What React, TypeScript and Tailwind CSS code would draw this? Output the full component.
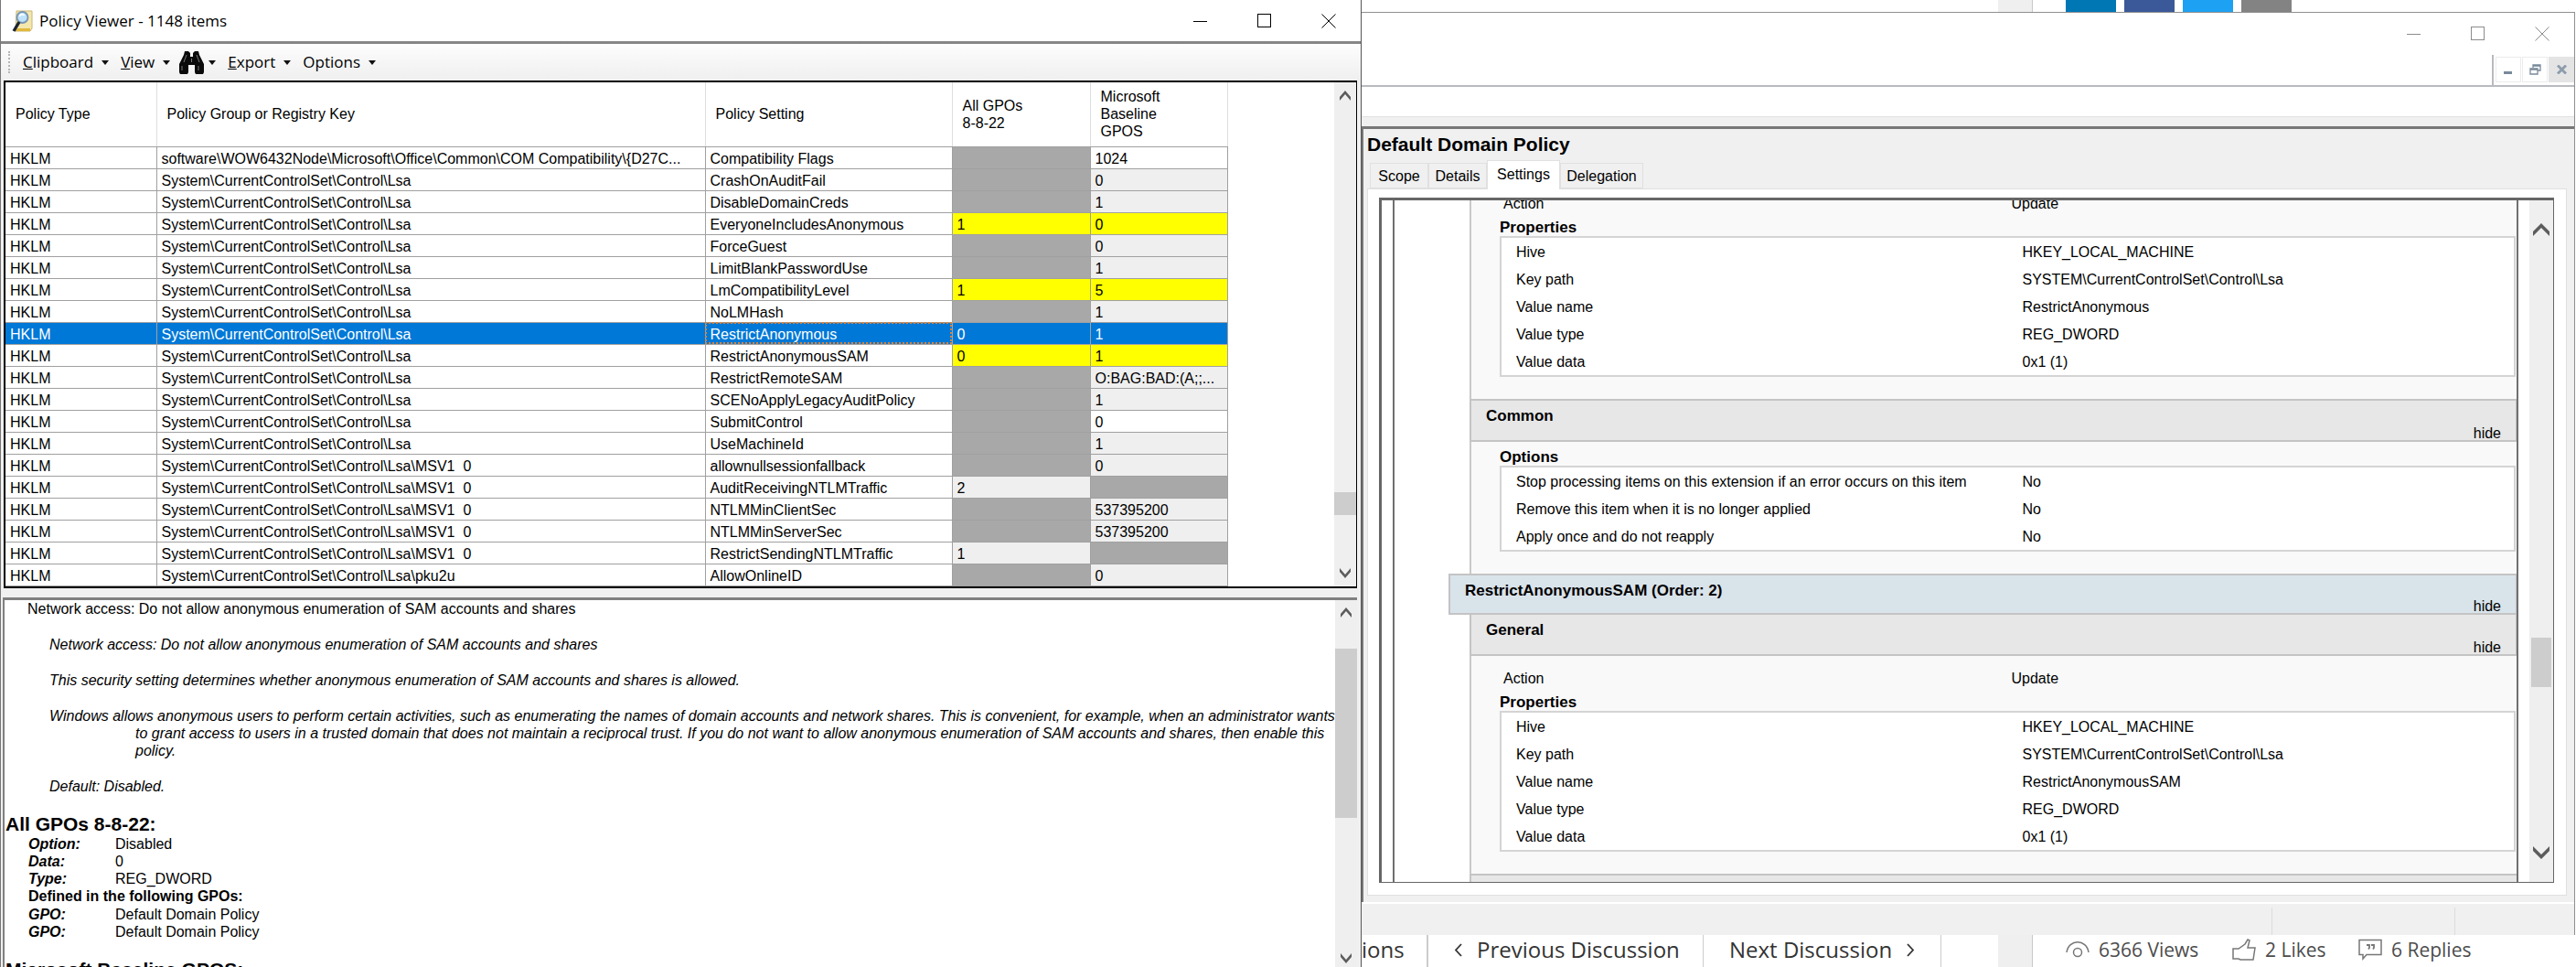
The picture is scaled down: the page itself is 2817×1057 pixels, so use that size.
import React, { useState } from 'react';

type CellTone = 'plain' | 'shade' | 'empty' | 'diff';

interface PolicyRow {
  path: string;
  setting: string;
  all: string;
  allTone: CellTone;
  base: string;
  baseTone: CellTone;
}

const LSA = 'System\\CurrentControlSet\\Control\\Lsa';
const MSV = 'System\\CurrentControlSet\\Control\\Lsa\\MSV1  0';

const row = (
  path: string,
  setting: string,
  all: string,
  allTone: CellTone,
  base: string,
  baseTone: CellTone
): PolicyRow => ({ path, setting, all, allTone, base, baseTone });

const rows: PolicyRow[] = [
  row('software\\WOW6432Node\\Microsoft\\Office\\Common\\COM Compatibility\\{D27C...', 'Compatibility Flags', '', 'empty', '1024', 'plain'),
  row(LSA, 'CrashOnAuditFail', '', 'empty', '0', 'shade'),
  row(LSA, 'DisableDomainCreds', '', 'empty', '1', 'shade'),
  row(LSA, 'EveryoneIncludesAnonymous', '1', 'diff', '0', 'diff'),
  row(LSA, 'ForceGuest', '', 'empty', '0', 'shade'),
  row(LSA, 'LimitBlankPasswordUse', '', 'empty', '1', 'shade'),
  row(LSA, 'LmCompatibilityLevel', '1', 'diff', '5', 'diff'),
  row(LSA, 'NoLMHash', '', 'empty', '1', 'shade'),
  row(LSA, 'RestrictAnonymous', '0', 'diff', '1', 'diff'),
  row(LSA, 'RestrictAnonymousSAM', '0', 'diff', '1', 'diff'),
  row(LSA, 'RestrictRemoteSAM', '', 'empty', 'O:BAG:BAD:(A;;...', 'shade'),
  row(LSA, 'SCENoApplyLegacyAuditPolicy', '', 'empty', '1', 'shade'),
  row(LSA, 'SubmitControl', '', 'empty', '0', 'plain'),
  row(LSA, 'UseMachineId', '', 'empty', '1', 'shade'),
  row(MSV, 'allownullsessionfallback', '', 'empty', '0', 'shade'),
  row(MSV, 'AuditReceivingNTLMTraffic', '2', 'shade', '', 'empty'),
  row(MSV, 'NTLMMinClientSec', '', 'empty', '537395200', 'shade'),
  row(MSV, 'NTLMMinServerSec', '', 'empty', '537395200', 'shade'),
  row(MSV, 'RestrictSendingNTLMTraffic', '1', 'shade', '', 'empty'),
  row(LSA + '\\pku2u', 'AllowOnlineID', '', 'empty', '0', 'shade'),
];

const toneClass: Record<CellTone, string> = {
  plain: 'bg-white',
  shade: 'bg-[#efefef]',
  empty: 'bg-[#a8a8a8]',
  diff: 'bg-[#ffff00]',
};

const registryValues = (name: string) => [
  ['Hive', 'HKEY_LOCAL_MACHINE'],
  ['Key path', 'SYSTEM\\CurrentControlSet\\Control\\Lsa'],
  ['Value name', name],
  ['Value type', 'REG_DWORD'],
  ['Value data', '0x1 (1)'],
];

const commonOptions = [
  ['Stop processing items on this extension if an error occurs on this item', 'No'],
  ['Remove this item when it is no longer applied', 'No'],
  ['Apply once and do not reapply', 'No'],
];

const WindowButtons: React.FC<{ color: string; className: string }> = ({ color, className }) => (
  <div className={`flex items-center ${className}`}>
    <button aria-label="Minimize">
      <svg width="16" height="16" viewBox="0 0 16 16" stroke={color} fill="none" shapeRendering="crispEdges">
        <path d="M0 8.5h15" />
      </svg>
    </button>
    <button aria-label="Maximize">
      <svg width="16" height="16" viewBox="0 0 16 16" stroke={color} fill="none" shapeRendering="crispEdges">
        <path d="M0.5 0.5h14v14h-14z" />
      </svg>
    </button>
    <button aria-label="Close">
      <svg width="16" height="16" viewBox="0 0 16 16" stroke={color} fill="none">
        <path d="M0.5 0.5l15 15M15.5 0.5l-15 15" />
      </svg>
    </button>
  </div>
);

const ScrollButton: React.FC<{ up?: boolean; large?: boolean; className?: string }> = ({ up, large, className = 'h-7' }) => (
  <button aria-label={up ? 'Scroll up' : 'Scroll down'} className={`flex shrink-0 items-center justify-center ${className}`}>
    <svg width={large ? 18 : 12} height={large ? 14 : 11} viewBox="0 0 12 11" preserveAspectRatio="none">
      <path d={up ? 'M6 0L12 7v4L6 4L0 11V7z' : 'M6 11L0 4V0l6 7l6-7v4z'} fill="#5c5c5c" />
    </svg>
  </button>
);

const AppIcon = () => (
  <svg width="24" height="26" viewBox="0 0 24 26">
    <path d="M5 2h17v19l-2 3H4z" fill="#f4e7ae" stroke="#c9b673" />
    <path d="M6 21h14v3H4z" fill="#e2b93c" />
    <circle cx="11.500" cy="9" r="6" fill="#bfe3fa" stroke="#7795b5" strokeWidth="1.8" />
    <path d="M8.500 8c1-3 4-3 5-1" stroke="#fff" strokeWidth="1.6" fill="none" />
    <path d="M8 14L2 24" stroke="#1c2430" strokeWidth="3.4" />
  </svg>
);

const Binoculars = () => (
  <svg width="31" height="26" viewBox="0 0 31 26">
    <path d="M8 1h4l2 2v4h3V3l2-2h4l1 4 5 10v9l-1 2h-8l-1-2v-8h-7v8l-1 2H3l-1-2v-9L7 5z" fill="#0a0a0a" />
    <path d="M5 17v5M23 17v5M10 5l-3 8M21 5l3 8M15.500 9v4" stroke="#777" strokeWidth="1" fill="none" />
  </svg>
);

const Caret = () => (
  <svg width="8" height="5" viewBox="0 0 8 5">
    <path d="M0 0h8L4 5z" fill="#111" />
  </svg>
);

const columns = [
  ['Policy Type'],
  ['Policy Group or Registry Key'],
  ['Policy Setting'],
  ['All GPOs', '8-8-22'],
  ['Microsoft', 'Baseline', 'GPOS'],
];

const PolicyGrid = () => {
  const [selected, setSelected] = useState('RestrictAnonymous');

  return (
    <div className="mr-1 ml-[3px] flex justify-between border-2 border-r border-black bg-white">
      <table className="w-[1336px] table-fixed border-collapse text-left text-base">
        <colgroup>
          <col className="w-[165px]" />
          <col className="w-[600px]" />
          <col className="w-[270px]" />
          <col className="w-[151px]" />
          <col className="w-[150px]" />
        </colgroup>
        <thead>
          <tr className="h-[70px] leading-[19px]">
            {columns.map(lines => (
              <th key={lines[0]} className="border-r border-b border-r-[#dedede] border-b-[#a0a0a0] py-0 pr-0 pl-[11px] font-normal">
                {lines.map(line => (
                  <div key={line}>{line}</div>
                ))}
              </th>
            ))}
          </tr>
        </thead>
        <tbody>
          {rows.map(item => {
            const active = item.setting === selected;
            const cell = 'border-r border-b border-[#a0a0a0] pt-0.5 pb-0 pl-[5px]';
            return (
              <tr
                key={item.setting}
                onClick={() => setSelected(item.setting)}
                className={`h-6 leading-[21px] whitespace-pre ${active ? 'bg-[#0078d7] text-white' : ''}`}
              >
                <td className={cell}>HKLM</td>
                <td className={`${cell} overflow-hidden`}>{item.path}</td>
                <td className={`${cell} ${active ? 'outline-2 -outline-offset-2 outline-dotted outline-[#d98236]' : ''}`}>{item.setting}</td>
                <td className={`${cell} ${active ? '' : toneClass[item.allTone]}`}>{item.all}</td>
                <td className={`${cell} ${active ? '' : toneClass[item.baseTone]}`}>{item.base}</td>
              </tr>
            );
          })}
        </tbody>
      </table>
      <div className="flex w-6 flex-col bg-[#efefef]">
        <ScrollButton up />
        <div className="grow-[418]" />
        <div className="grow-[25] bg-[#cdcdcd]" />
        <div className="grow-[49]" />
        <ScrollButton />
      </div>
    </div>
  );
};

const DetailLine: React.FC<{ label: string; value: string }> = ({ label, value }) => (
  <div className="flex pl-[26px]">
    <dt className="w-[95px] font-bold italic">{label}</dt>
    <dd>{value}</dd>
  </div>
);

const PolicyDetails = () => (
  <div className="mr-1 ml-0.5 flex min-h-0 grow border-t-3 border-l-2 border-[#808080] bg-white">
    <div className="min-w-0 grow overflow-hidden text-base leading-[19px]">
      <p className="pl-[25px]">Network access: Do not allow anonymous enumeration of SAM accounts and shares</p>
      <div className="flex flex-col gap-5 pt-5 pl-[49px] italic">
        <p>Network access: Do not allow anonymous enumeration of SAM accounts and shares</p>
        <p>This security setting determines whether anonymous enumeration of SAM accounts and shares is allowed.</p>
        <p className="pl-[94px] -indent-[94px] whitespace-nowrap">
          Windows allows anonymous users to perform certain activities, such as enumerating the names of domain accounts and network shares. This is convenient, for example, when an administrator wants
          <br />
          to grant access to users in a trusted domain that does not maintain a reciprocal trust. If you do not want to allow anonymous enumeration of SAM accounts and shares, then enable this
          <br />
          policy.
        </p>
        <p>Default: Disabled.</p>
      </div>
      <h2 className="mt-5 pl-px text-[21px] leading-6 font-bold">All GPOs 8-8-22:</h2>
      <dl>
        <DetailLine label="Option:" value="Disabled" />
        <DetailLine label="Data:" value="0" />
        <DetailLine label="Type:" value="REG_DWORD" />
        <p className="pl-[26px] leading-5 font-bold">Defined in the following GPOs:</p>
        <DetailLine label="GPO:" value="Default Domain Policy" />
        <DetailLine label="GPO:" value="Default Domain Policy" />
      </dl>
      <h2 className="mt-5 pl-px text-[21px] leading-6 font-bold">Microsoft Baseline GPOS:</h2>
    </div>
    <div className="flex w-6 shrink-0 flex-col bg-[#efefef]">
      <ScrollButton up />
      <div className="grow-[26]" />
      <div className="grow-[185] bg-[#cdcdcd]" />
      <div className="grow-[143]" />
      <ScrollButton className="h-5" />
    </div>
  </div>
);

const PolicyViewer = () => (
  <section className="flex min-h-0 flex-col overflow-hidden border-r border-l border-r-[#555] border-l-[#777] bg-[#f0f0f0]">
    <header className="flex h-[45px] shrink-0 items-center justify-between bg-white pr-[27px] pl-3">
      <div className="flex items-center gap-1.5 font-['Open_Sans',sans-serif] text-[17px]">
        <AppIcon />
        <h1>Policy Viewer - 1148 items</h1>
      </div>
      <WindowButtons color="#000" className="gap-[54px]" />
    </header>
    <nav className="flex h-[43px] shrink-0 items-center border-t-3 border-[#868686] bg-linear-to-b from-[#fdfdfd] to-[#efefef] pl-2 font-['Open_Sans',sans-serif] text-[17px]">
      <div className="mr-3.5 h-6 border-l-2 border-dotted border-[#b5b5b5]" />
      <button className="mr-[13px] flex items-center gap-[9px]"><span><u>C</u>lipboard</span><Caret /></button>
      <button className="mr-2 flex items-center gap-[9px]"><span><u>V</u>iew</span><Caret /></button>
      <button aria-label="Find" className="mr-[13px] flex items-center gap-[3px]"><Binoculars /><Caret /></button>
      <button className="mr-[13px] flex items-center gap-[9px]"><span><u>E</u>xport</span><Caret /></button>
      <button className="flex items-center gap-[9px]"><span>Options</span><Caret /></button>
    </nav>
    <PolicyGrid />
    <div className="h-[10px] shrink-0" />
    <PolicyDetails />
  </section>
);

const Band: React.FC<{ title: string; className: string }> = ({ title, className }) => (
  <div className={`flex shrink-0 justify-between border-[#c4c4c4] pr-4 ${className}`}>
    <h3 className="pt-2 text-[17px] leading-[18px] font-bold">{title}</h3>
    <button className="self-end leading-[14px]">hide</button>
  </div>
);

const ValueTable: React.FC<{ title: string; values: string[][] }> = ({ title, values }) => (
  <>
    <h4 className="text-[17px] leading-[18px] font-bold">{title}</h4>
    <div className="border-2 border-[#d4d4d4] bg-white">
      <table className="w-full table-fixed text-left">
        <tbody>
          {values.map(([label, value]) => (
            <tr key={label} className="h-[30px] leading-7">
              <th className="w-1/2 pt-0.5 pr-0 pb-0 pl-4 font-normal">{label}</th>
              <td className="pt-0.5 pr-0 pb-0 pl-4">{value}</td>
            </tr>
          ))}
        </tbody>
      </table>
    </div>
  </>
);

const SettingsReport = () => (
  <div className="mr-3 ml-3 flex grow flex-col overflow-hidden border-r-2 border-l-2 border-[#707070] text-base">
    <div className="ml-[82px] border-l-2 border-[#c9c9c9] bg-[#f9f9f9] pr-px pb-6 pl-[31px]">
      <div className="flex h-[13px] items-end overflow-hidden leading-[18px]">
        <span className="w-1/2 pl-1">Action</span>
        <span className="pl-1">Update</span>
      </div>
      <div className="h-2" />
      <ValueTable title="Properties" values={registryValues('RestrictAnonymous')} />
    </div>
    <Band title="Common" className="ml-[82px] h-[47px] border-2 border-r bg-[#e7e7e7] pl-4" />
    <div className="ml-[82px] border-l-2 border-[#c9c9c9] bg-[#f9f9f9] pt-2 pr-px pb-6 pl-[31px]">
      <ValueTable title="Options" values={commonOptions} />
    </div>
    <Band title="RestrictAnonymousSAM (Order: 2)" className="ml-[59px] h-[45px] border-2 border-r bg-[#d9e3ea] pl-4" />
    <Band title="General" className="ml-[82px] h-[45px] border-2 border-t-0 border-r bg-[#e7e7e7] pl-4" />
    <div className="ml-[82px] border-l-2 border-[#c9c9c9] bg-[#f9f9f9] pt-4 pr-px pb-6 pl-[31px]">
      <div className="mb-2 flex leading-[18px]">
        <span className="w-1/2 pl-1">Action</span>
        <span className="pl-1">Update</span>
      </div>
      <ValueTable title="Properties" values={registryValues('RestrictAnonymousSAM')} />
    </div>
    <div className="ml-[82px] min-h-1.5 grow border-t-2 border-l-2 border-[#c4c4c4] bg-[#e7e7e7]" />
  </div>
);

const tabs = ['Scope', 'Details', 'Settings', 'Delegation'];
const tabWidths = ['w-16', 'w-16', 'w-20', 'w-[91px]'];

const DomainPolicyWindow = () => {
  const [tab, setTab] = useState('Settings');

  return (
    <section className="mr-px flex min-h-0 grow flex-col overflow-hidden border-t border-r border-[#8f8f8f] bg-[#f0f0f0]">
      <header className="flex h-[46px] shrink-0 items-center justify-end bg-white pr-[27px]">
        <WindowButtons color="#8c8c8c" className="gap-[54px]" />
      </header>
      <div className="flex h-[35px] shrink-0 justify-end border-b-2 border-[#b8babf] bg-white">
        <div className="flex gap-px border-l-2 border-[#b8babf] pt-0.5 pl-0.5">
          <button aria-label="Minimize child" className="flex h-7 w-7 items-center justify-center border border-[#ececec]">
            <svg width="10" height="10" viewBox="0 0 10 10"><path d="M0 7h9v3H0z" fill="#78899a" /></svg>
          </button>
          <button aria-label="Restore child" className="flex h-7 w-7 items-center justify-center border border-[#ececec]">
            <svg width="13" height="12" viewBox="0 0 13 12" fill="none" stroke="#78899a" strokeWidth="1.3">
              <path d="M4 4V1h8v6H9M4 2h8M1 5h8v6H1zM1 6h8" />
            </svg>
          </button>
          <button aria-label="Close child" className="flex h-7 w-7 items-center justify-center bg-[#e4e4e4]">
            <svg width="11" height="10" viewBox="0 0 11 10" stroke="#8c9cac" strokeWidth="2.8"><path d="M1 0.500l9 9M10 0.500l-9 9" /></svg>
          </button>
        </div>
      </div>
      <div className="h-[33px] shrink-0 border-b border-[#e2e2e2] bg-white" />
      <div className="h-[10px] shrink-0" />
      <div className="flex min-h-0 grow flex-col border-t-3 border-l-2 border-[#777] pr-2 pb-[7px] pl-1">
        <h2 className="pt-1 text-[21px] leading-[26px] font-bold">Default Domain Policy</h2>
        <div role="tablist" className="mt-1 flex h-[31px] shrink-0 items-end pl-[3px] text-base">
          {tabs.map((name, i) => (
            <button
              key={name}
              role="tab"
              aria-selected={tab === name}
              onClick={() => setTab(name)}
              className={`${tabWidths[i]} border border-[#e0e0e0] ${
                tab === name ? 'z-10 -mb-px h-8 border-b-0 bg-white pb-0.5' : 'h-7 pt-0.5'
              }`}
            >
              {name}
            </button>
          ))}
        </div>
        <div className="flex min-h-0 grow border border-[#e0e0e0] bg-white pt-[9px] pr-[13px] pb-[13px] pl-3">
          <div className="flex min-w-0 grow border border-t-3 border-l-3 border-[#666]">
            <SettingsReport />
            <div className="flex w-[26px] shrink-0 flex-col bg-[#efefef]">
              <ScrollButton up large className="h-16" />
              <div className="grow-[413]" />
              <div className="mx-0.5 grow-[54] bg-[#cdcdcd]" />
              <div className="grow-[149]" />
              <ScrollButton large className="h-16" />
            </div>
          </div>
        </div>
      </div>
      <div className="flex h-9 shrink-0 justify-end border-t-2 border-white pt-1">
        <div className="w-[200px] border-l border-[#dcdcdc]" />
        <div className="w-[131px] border-l border-[#dcdcdc]" />
      </div>
    </section>
  );
};

const ShareStrip = () => (
  <div className="flex h-[13px] shrink-0 justify-end bg-white">
    <div className="w-[38px] border-r border-[#c8c8c8] bg-[#efefef]" />
    <div className="flex w-[594px] gap-[9px] pl-9">
      <div className="w-[55px] bg-[#0077b5]" />
      <div className="w-[55px] bg-[#3b5998]" />
      <div className="w-[55px] bg-[#1da1f2]" />
      <div className="w-[55px] bg-[#838383]" />
    </div>
  </div>
);

const DiscussionBar = () => (
  <footer className="flex h-[35px] shrink-0 justify-between overflow-hidden bg-white font-['Open_Sans',sans-serif] text-2xl leading-8 text-[#333]">
    <div className="flex">
      <a href="#discussions" className="w-[73px] border-r-2 border-[#ccc]">ions</a>
      <a href="#previous" className="flex w-[301px] gap-4 border-r border-[#ccc] pl-7">
        <svg className="mt-[9px]" width="9" height="15" viewBox="0 0 9 15" fill="none" stroke="#333" strokeWidth="1.8"><path d="M8 1L2 7.500l6 6.500" /></svg>
        Previous Discussion
      </a>
      <a href="#next" className="flex w-[260px] gap-4 border-r border-[#ccc] pl-7">
        Next Discussion
        <svg className="mt-[9px]" width="9" height="15" viewBox="0 0 9 15" fill="none" stroke="#333" strokeWidth="1.8"><path d="M1 1l6 6.500L1 14" /></svg>
      </a>
    </div>
    <div className="flex text-[21px] text-[#4c4c4c]">
      <div className="w-[38px] border-r border-[#c8c8c8] bg-[#efefef]" />
      <div className="flex h-8 w-[594px] items-center pl-9">
        <span className="flex w-[182px] items-center gap-2.5">
          <svg width="26" height="20" viewBox="0 0 26 20" fill="none" stroke="#777" strokeWidth="1.500">
            <path d="M1 13C3 -2 23 -2 25 13" />
            <circle cx="13" cy="13" r="4.500" />
          </svg>
          6366 Views
        </span>
        <span className="flex w-[138px] items-center gap-2.5">
          <svg width="26" height="24" viewBox="0 0 26 24" fill="none" stroke="#777" strokeWidth="1.500">
            <path d="M1 11h6l7-5 3-5 2 1-2 8h8l-2 13H9l-2-1H1z" />
          </svg>
          2 Likes
        </span>
        <span className="flex items-center gap-2.5">
          <svg width="26" height="24" viewBox="0 0 26 24" fill="none" stroke="#777" strokeWidth="1.500">
            <path d="M1 1.500h24v16H9l-4 4.500v-4.500H1z" />
            <path d="M9 7h3v3l-1 1.500M14 7h3v3l-1 1.500" strokeWidth="1.800" />
          </svg>
          6 Replies
        </span>
      </div>
    </div>
  </footer>
);

function App() {
  return (
    <div className="grid h-screen grid-cols-[1489fr_1328fr] overflow-hidden bg-white font-['Liberation_Sans',Arial,sans-serif] text-black">
      <PolicyViewer />
      <div className="flex min-h-0 min-w-0 flex-col">
        <ShareStrip />
        <DomainPolicyWindow />
        <DiscussionBar />
      </div>
    </div>
  );
}

export default App;
